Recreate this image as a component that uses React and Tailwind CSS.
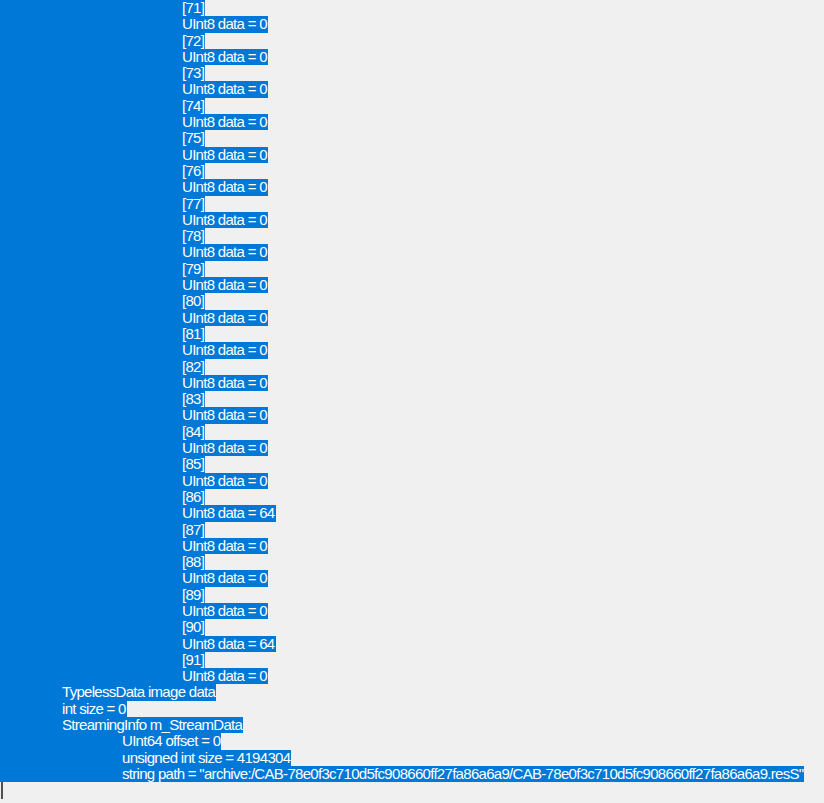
import React from "react";

const lines = [];
for (let i = 71; i <= 91; i++) {
  lines.push({ level: 3, text: `[${i}]` });
  lines.push({ level: 3, text: `UInt8 data = ${i === 86 || i === 90 ? 64 : 0}` });
}
lines.push({ level: 1, text: "TypelessData image data" });
lines.push({ level: 1, text: "int size = 0" });
lines.push({ level: 1, text: "StreamingInfo m_StreamData" });
lines.push({ level: 2, text: "UInt64 offset = 0" });
lines.push({ level: 2, text: "unsigned int size = 4194304" });
lines.push({
  level: 2,
  text: 'string path = "archive:/CAB-78e0f3c710d5fc908660ff27fa86a6a9/CAB-78e0f3c710d5fc908660ff27fa86a6a9.resS"',
});

const indent = { 1: "pl-[62px]", 2: "pl-[122px]", 3: "pl-[182px]" };

export default function App() {
  return (
    <div
      className="w-[824px] h-[803px] overflow-hidden bg-[#f0f0f0] text-white text-[15px] leading-[16.3px] tracking-[-0.7px]"
      style={{ fontFamily: '"Liberation Sans", Arial, sans-serif' }}
    >
      {lines.map((l, i) => (
        <div key={i} className="flex h-[16.3px]">
          <span className={`bg-[#0078d7] whitespace-pre pr-[1px] ${indent[l.level]}`}>{l.text}</span>
        </div>
      ))}
      <div className="flex h-[17px] pl-[1px]">
        <span className="w-[2px] h-[17px] bg-[#505050]" />
      </div>
    </div>
  );
}
